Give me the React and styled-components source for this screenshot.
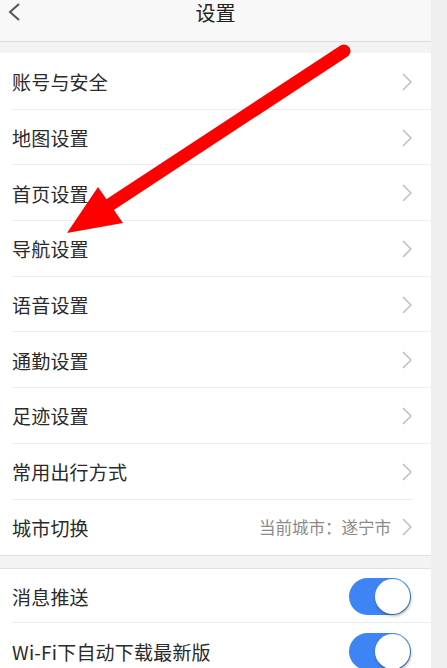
import React from "react";
import styled, { createGlobalStyle } from "styled-components";

const Global = createGlobalStyle`
  html, body { margin: 0; padding: 0; background: #efefef; }
  body { font-family: "Noto Sans CJK SC", "Noto Sans", sans-serif; }
`;

const Page = styled.div`
  position: relative;
  width: 447px;
  height: 668px;
  overflow: hidden;
  background: #efefef;
`;

const Screen = styled.div`
  width: 431px;
  background: #f2f3f3;
  min-height: 668px;
`;

const Header = styled.header`
  height: 41px;
  background: #f8f8f8;
  border-bottom: 1px solid #dcdcdc;
  display: flex;
  align-items: flex-start;
  justify-content: center;
  position: relative;
`;

const Title = styled.h1`
  margin: 0;
  font-size: 20px;
  font-weight: 400;
  line-height: 26px;
  color: #222;
`;

const Back = styled.svg`
  position: absolute;
  left: 6px;
  top: 0;
`;

const Section = styled.section`
  margin-top: ${(p) => p.$gap}px;
  background: #fff;
  border-top: 1px solid ${(p) => (p.$topBorder ? "#e2e2e2" : "transparent")};
  border-bottom: 1px solid #e2e2e2;
`;

const Row = styled.div`
  position: relative;
  height: ${(p) => p.$h}px;
  margin-left: 12px;
  padding-right: 19px;
  display: flex;
  align-items: center;
  justify-content: space-between;
  &::after {
    content: "";
    display: ${(p) => (p.$last ? "none" : "block")};
    position: absolute;
    left: 0;
    right: ${(p) => (p.$short ? "18px" : "0")};
    bottom: 0;
    height: 1px;
    background: #ededed;
  }
`;

const Label = styled.span`
  font-size: 19px;
  color: #2a2a2a;
  letter-spacing: 0.2px;
`;

const Right = styled.div`
  display: flex;
  align-items: center;
  gap: 11px;
`;

const Value = styled.span`
  font-size: 16.5px;
  color: #8a8a8a;
`;

const Toggle = styled.div`
  width: 62px;
  height: 37px;
  border-radius: 19px;
  background: #3e84f5;
  position: relative;
  margin-right: 1px;
  &::after {
    content: "";
    position: absolute;
    right: 1px;
    top: 1px;
    width: 35px;
    height: 35px;
    border-radius: 50%;
    background: #fff;
    box-shadow: 1px 2px 3px rgba(0, 0, 0, 0.3);
  }
`;

const ArrowLayer = styled.svg`
  position: absolute;
  left: 0;
  top: 0;
  pointer-events: none;
`;

const Chevron = () => (
  <svg width="10" height="18" viewBox="0 0 10 18">
    <polyline points="1,1 9,9 1,17" fill="none" stroke="#bdbdbd" strokeWidth="1.5" />
  </svg>
);

const items = [
  "账号与安全",
  "地图设置",
  "首页设置",
  "导航设置",
  "语音设置",
  "通勤设置",
  "足迹设置",
  "常用出行方式",
];

export default function App() {
  return (
    <Page>
      <Global />
      <Screen>
        <Header>
          <Back width="18" height="26" viewBox="0 0 18 26">
            <polyline points="13,4 4,12 13,20" fill="none" stroke="#555" strokeWidth="2" />
          </Back>
          <Title>设置</Title>
        </Header>
        <Section $gap={11}>
          {items.map((t, i) => (
            <Row key={t} $h={55.7} $short={i === items.length - 1}>
              <Label>{t}</Label>
              <Chevron />
            </Row>
          ))}
          <Row $h={55.7} $last>
            <Label>城市切换</Label>
            <Right>
              <Value>当前城市：遂宁市</Value>
              <Chevron />
            </Right>
          </Row>
        </Section>
        <Section $gap={12} $topBorder>
          <Row $h={54}>
            <Label>消息推送</Label>
            <Toggle />
          </Row>
          <Row $h={56} $last>
            <Label>Wi-Fi下自动下载最新版</Label>
            <Toggle />
          </Row>
        </Section>
      </Screen>
      <ArrowLayer width="447" height="668" viewBox="0 0 447 668">
        <line x1="344" y1="51" x2="108" y2="206" stroke="#ff0000" strokeWidth="13" strokeLinecap="round" />
        <polygon points="67,233 98,187 123,223" fill="#ff0000" />
      </ArrowLayer>
    </Page>
  );
}
